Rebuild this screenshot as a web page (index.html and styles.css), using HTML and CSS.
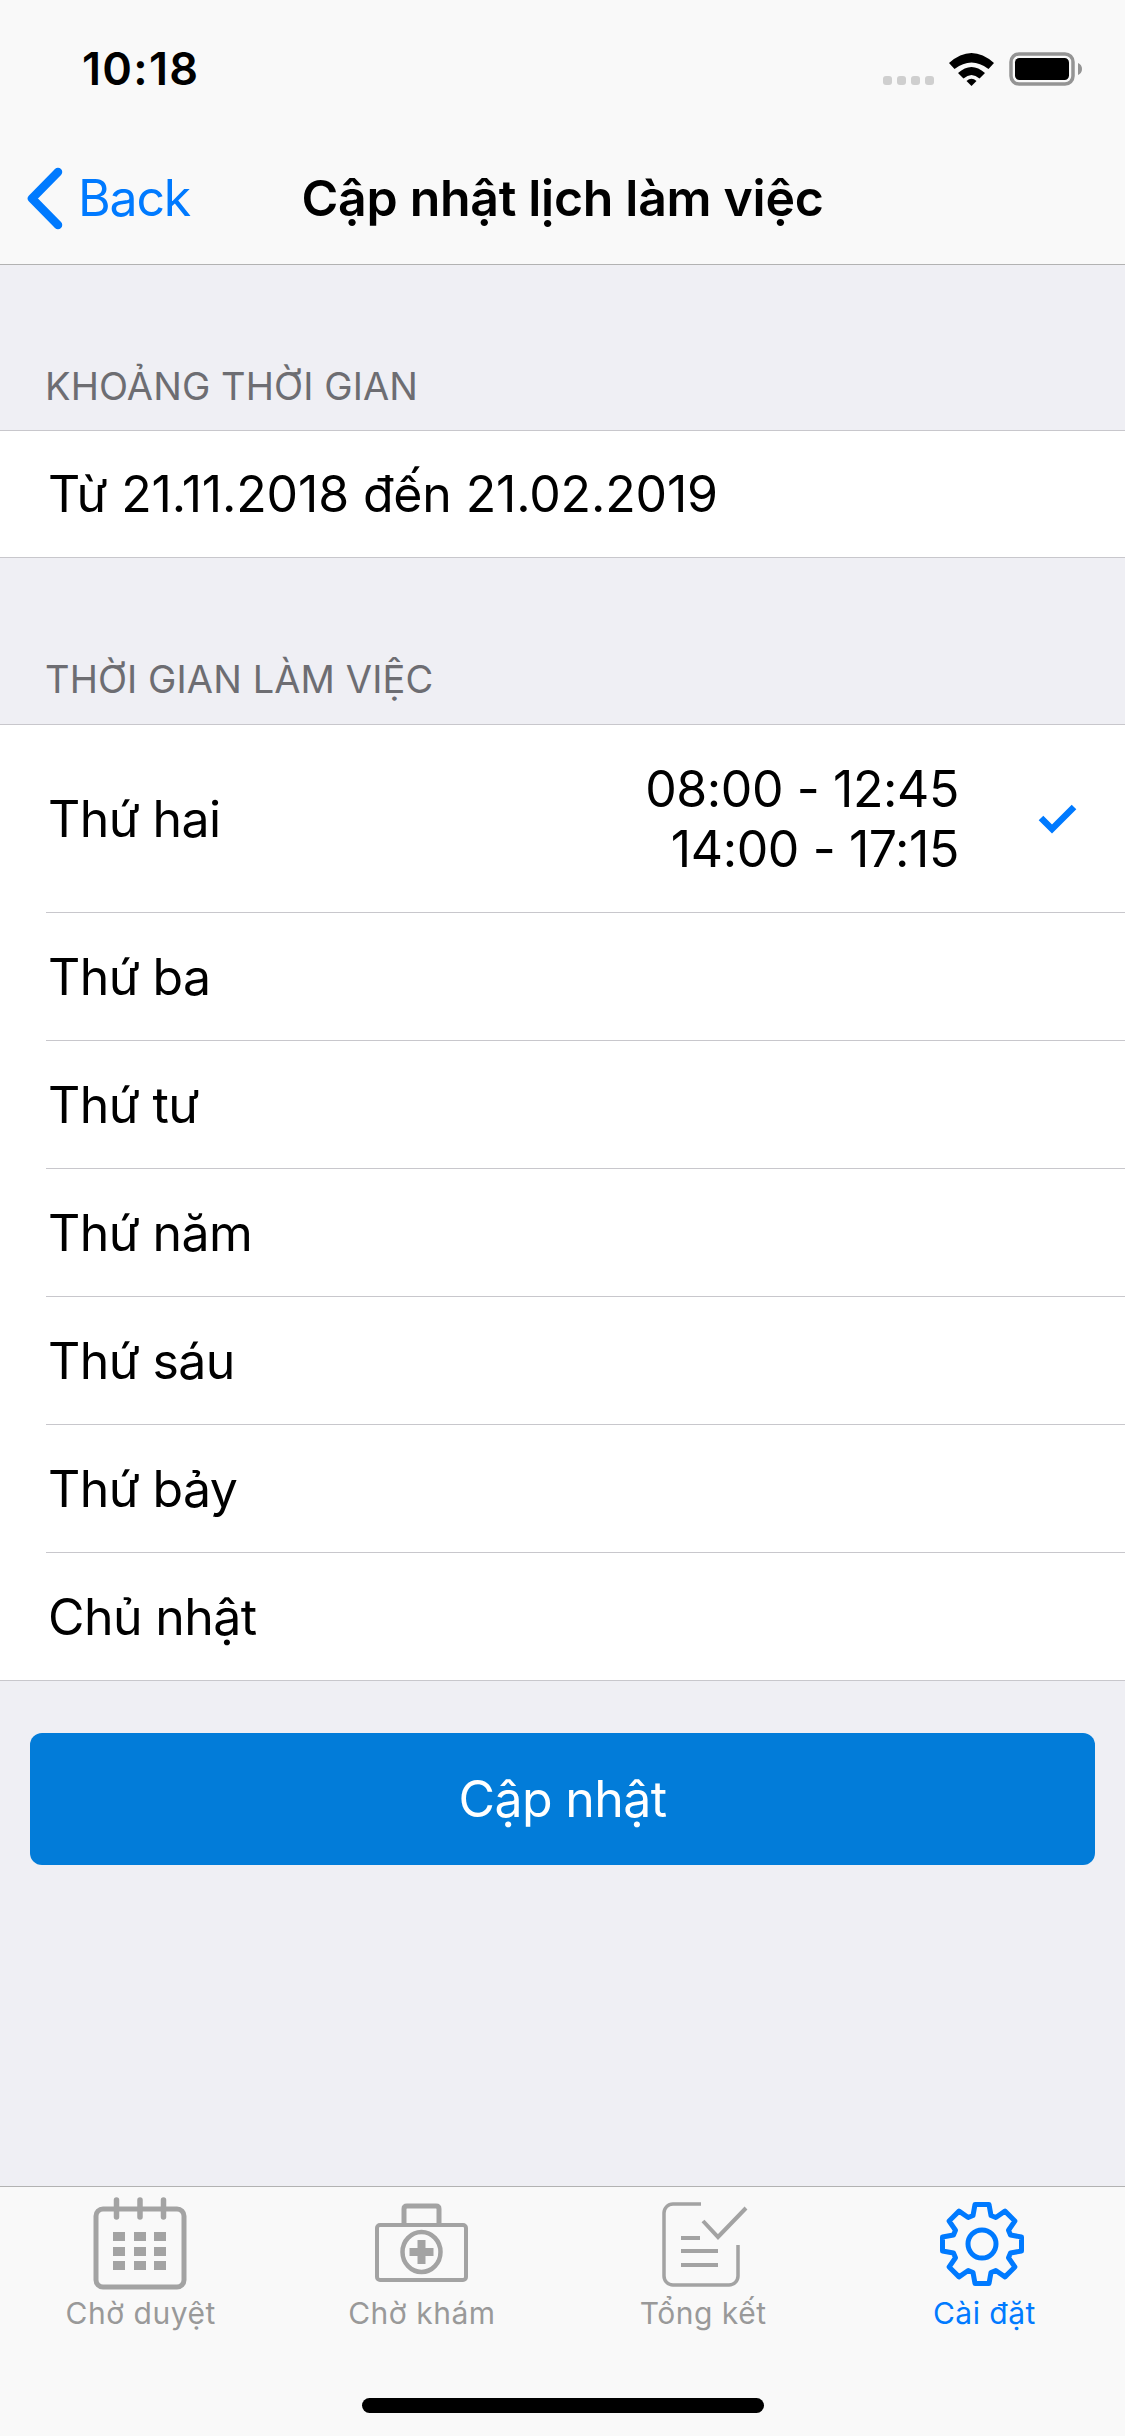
FILE: index.html
```html
<!DOCTYPE html>
<html lang="vi">
<head>
    <meta charset="UTF-8">
    <meta name="viewport" content="width=device-width, initial-scale=1.0">
    <title>Cập nhật lịch làm việc</title>
    <link rel="stylesheet" href="styles.css">
</head>
<body>
<div class="page">
    <header class="top-bar">
        <div class="status-bar">
            <span class="clock">10:18</span>
            <div class="status-icons">
                <div class="signal"><i></i><i></i><i></i><i></i></div>
                <svg class="wifi" width="45" height="33" viewBox="0 0 45 33">
                    <path d="M0 10Q22.500 -10 45 10L39.500 16Q22.500 3 5.500 16Z"/>
                    <path d="M9 20Q22.500 8 36 20L30.500 25.500Q22.500 18.500 14.500 25.500Z"/>
                    <path d="M17.500 28Q22.500 23.500 27.500 28L22.500 33Z"/>
                </svg>
                <svg class="battery" width="73" height="34" viewBox="0 0 73 34">
                    <rect x="2" y="2" width="62" height="30" rx="8" fill="none" stroke="#949494" stroke-width="3.500"/>
                    <rect x="6" y="6" width="54" height="22" rx="4.500" fill="#000"/>
                    <path d="M69 11C71.500 12 73 14 73 17C73 20 71.500 22 69 23Z" fill="#949494"/>
                </svg>
            </div>
        </div>
        <nav class="nav-bar">
            <a class="back">
                <svg width="37" height="63" viewBox="0 0 37 63">
                    <path d="M32 5L6 31.500L32 58" fill="none" stroke="#007aff" stroke-width="8.500" stroke-linecap="round" stroke-linejoin="round"/>
                </svg>
                <span>Back</span>
            </a>
            <h1>Cập nhật lịch làm việc</h1>
            <span></span>
        </nav>
    </header>

    <main class="content">
        <h2 class="section-title">KHOẢNG THỜI GIAN</h2>
        <div class="group">
            <div class="row row-single"><span class="row-label date-range">Từ 21.11.2018 đến 21.02.2019</span></div>
        </div>

        <h2 class="section-title">THỜI GIAN LÀM VIỆC</h2>
        <div class="group">
            <div class="row row-tall">
                <span class="row-label">Thứ hai</span>
                <div class="times">
                    <div>08:00 - 12:45</div>
                    <div>14:00 - 17:15</div>
                </div>
                <svg class="check" width="39" height="30" viewBox="0 0 39 30">
                    <path d="M3 14L14 25L36 3" fill="none" stroke="#007aff" stroke-width="6.500"/>
                </svg>
            </div>
            <div class="row"><span class="row-label">Thứ ba</span></div>
            <div class="row"><span class="row-label">Thứ tư</span></div>
            <div class="row"><span class="row-label">Thứ năm</span></div>
            <div class="row"><span class="row-label">Thứ sáu</span></div>
            <div class="row"><span class="row-label">Thứ bảy</span></div>
            <div class="row"><span class="row-label">Chủ nhật</span></div>
        </div>

        <button class="update-btn" type="button">Cập nhật</button>
    </main>

    <footer class="tab-bar">
        <a class="tab">
            <svg class="tab-icon" width="96" height="96" viewBox="0 0 96 96">
                <rect x="3" y="15" width="88" height="78" rx="7" fill="none" stroke="#a3a3a3" stroke-width="5"/>
                <path d="M23.500 6V23M47 6V23M70.500 6V23" stroke="#a3a3a3" stroke-width="5.500" stroke-linecap="round"/>
                <g fill="#a3a3a3">
                    <rect x="20" y="38" width="12" height="9"/><rect x="41" y="38" width="12" height="9"/><rect x="61" y="38" width="12" height="9"/>
                    <rect x="20" y="53" width="12" height="9"/><rect x="41" y="53" width="12" height="9"/><rect x="61" y="53" width="12" height="9"/>
                    <rect x="20" y="67" width="12" height="9"/><rect x="41" y="67" width="12" height="9"/><rect x="61" y="67" width="12" height="9"/>
                </g>
            </svg>
            <span>Chờ duyệt</span>
        </a>
        <a class="tab">
            <svg class="tab-icon" width="96" height="96" viewBox="0 0 96 96">
                <rect x="3" y="31" width="89" height="55" rx="3" fill="none" stroke="#a3a3a3" stroke-width="4"/>
                <path d="M30 30V15Q30 12 33 12H62Q65 12 65 15V30" fill="none" stroke="#a3a3a3" stroke-width="5"/>
                <ellipse cx="47.500" cy="58" rx="19" ry="20" fill="none" stroke="#a3a3a3" stroke-width="4.500"/>
                <path d="M47.500 46V70M35.500 58H59.500" stroke="#a3a3a3" stroke-width="8"/>
            </svg>
            <span>Chờ khám</span>
        </a>
        <a class="tab">
            <svg class="tab-icon" width="96" height="96" viewBox="0 0 96 96">
                <path d="M46 10H18A9 9 0 0 0 9 19V82A9 9 0 0 0 18 91H74A9 9 0 0 0 83 82V51" fill="none" stroke="#a3a3a3" stroke-width="3.500"/>
                <path d="M48 27L63 43L91 14" fill="none" stroke="#a3a3a3" stroke-width="4"/>
                <path d="M26 44H45M26 57H63M26 71H63" stroke="#a3a3a3" stroke-width="4"/>
            </svg>
            <span>Tổng kết</span>
        </a>
        <a class="tab tab-active">
            <svg class="tab-icon" width="96" height="96" viewBox="0 0 96 96">
                <g transform="translate(46 50)" fill="none" stroke="#007aff" stroke-width="5" stroke-linejoin="round">
                    <polygon points="-9,-28.500 -7,-39.500 7,-39.500 9,-28.500 13.790,-26.520 22.980,-32.880 32.880,-22.980 26.520,-13.790 28.500,-9 39.500,-7 39.500,7 28.500,9 26.520,13.790 32.880,22.980 22.980,32.880 13.790,26.520 9,28.500 7,39.500 -7,39.500 -9,28.500 -13.790,26.520 -22.980,32.880 -32.880,22.980 -26.520,13.790 -28.500,9 -39.500,7 -39.500,-7 -28.500,-9 -26.520,-13.790 -32.880,-22.980 -22.980,-32.880 -13.790,-26.520"/>
                    <circle r="14"/>
                </g>
            </svg>
            <span>Cài đặt</span>
        </a>
        <div class="home-indicator"></div>
    </footer>
</div>
</body>
</html>
```

FILE: styles.css
```css
* {
    box-sizing: border-box;
}
body {
    margin: 0;
    font-family: Inter, "Noto Sans", sans-serif;
    color: #000;
    background: #efeff4;
}
.page {
    display: flex;
    flex-direction: column;
    width: 1125px;
    height: 2436px;
    overflow: hidden;
}

/* top */
.top-bar {
    height: 265px;
    background: #f9f9f9;
    border-bottom: 1px solid #b2b2b2;
}
.status-bar {
    display: flex;
    align-items: center;
    justify-content: space-between;
    height: 132px;
    padding: 5px 43px 0 82px;
}
.clock {
    font-size: 45px;
    font-weight: 600;
    letter-spacing: 1.300px;
}
.status-icons {
    display: flex;
    align-items: flex-end;
    gap: 15px;
}
.signal {
    display: flex;
    gap: 5px;
    margin-bottom: 1px;
}
.signal i {
    width: 9px;
    height: 9px;
    border-radius: 3px;
    background: #cfcfcf;
}
.nav-bar {
    display: grid;
    grid-template-columns: 1fr auto 1fr;
    align-items: center;
    height: 132px;
}
.back {
    display: flex;
    align-items: center;
    gap: 15px;
    padding-left: 26px;
    color: #007aff;
    font-size: 50px;
    letter-spacing: -1.200px;
}
.nav-bar h1 {
    margin: 0;
    font-size: 50px;
    font-weight: 600;
    letter-spacing: -0.300px;
}

/* list */
.content {
    flex: 1;
    display: flex;
    flex-direction: column;
}
.section-title {
    margin: 0;
    height: 166px;
    padding: 99px 0 0 45px;
    font-size: 38px;
    line-height: 44px;
    font-weight: 400;
    color: #6d6d72;
    letter-spacing: 0.100px;
}
.section-title:first-child {
    height: 165px;
}
.group {
    background: #fff;
    border-top: 1px solid #c8c7cc;
    border-bottom: 1px solid #c8c7cc;
}
.row {
    display: flex;
    align-items: center;
    height: 128px;
    margin-left: 46px;
    padding: 0 48px 0 2px;
    border-bottom: 1px solid #c8c7cc;
    font-size: 50px;
    letter-spacing: -0.600px;
}
.row:last-child {
    height: 127px;
    border-bottom: 0;
}
.row:last-child.row-single {
    height: 126px;
}
.row-tall {
    height: 188px;
}
.row-label {
    flex: 1;
}
.date-range {
    letter-spacing: -0.150px;
}
.times {
    letter-spacing: -0.400px;
    line-height: 60px;
    text-align: right;
}
.check {
    margin-left: 79px;
}
.update-btn {
    height: 132px;
    margin: 52px 30px 0;
    border: 0;
    border-radius: 12px;
    background: #027cd9;
    color: #fff;
    font-family: inherit;
    font-size: 50px;
    letter-spacing: -0.600px;
}

/* tabs */
.tab-bar {
    position: relative;
    display: grid;
    grid-template-columns: repeat(4, 1fr);
    height: 250px;
    background: #f9f9f9;
    border-top: 1px solid #b2b2b2;
}
.tab {
    display: flex;
    flex-direction: column;
    align-items: center;
    padding-top: 7px;
    color: #999;
    font-size: 30px;
    line-height: 36px;
    letter-spacing: 0.500px;
}
.tab span {
    margin-top: 5px;
}
.tab-icon {
    display: block;
}
.tab-active {
    color: #007aff;
}
.home-indicator {
    position: absolute;
    left: 362px;
    bottom: 23px;
    width: 402px;
    height: 15px;
    border-radius: 8px;
    background: #000;
}
```
